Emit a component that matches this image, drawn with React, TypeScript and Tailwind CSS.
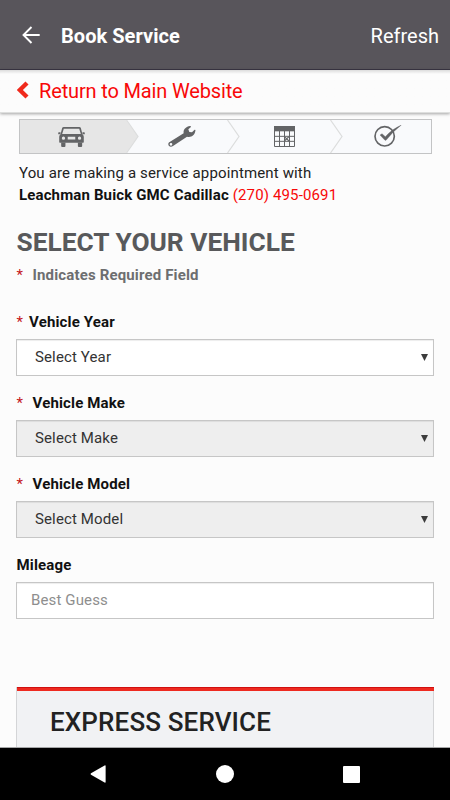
import { useState } from 'react'

const CarIcon = () => (
  <svg className="w-[27px] h-[20px]" viewBox="0 0 81 61" fill="#636466">
    <path fillRule="evenodd" d="M12 3Q13 0 17 0H64Q68 0 69 3L74 22H7ZM17 5L12 21H69L64 5Z" />
    <path d="M0 18Q0 16 2 16H7V22H0ZM81 18Q81 16 79 16H74V22H81Z" />
    <path
      fillRule="evenodd"
      d="M8 21H73Q78 24 78 30V46Q78 48 76 48H5Q3 48 3 46V30Q3 24 8 21ZM29 30V38H52V30ZM16 29A5 5 0 1 0 16 39A5 5 0 1 0 16 29ZM65 29A5 5 0 1 0 65 39A5 5 0 1 0 65 29Z"
    />
    <path d="M9 47H22V58Q22 61 19 61H12Q9 61 9 58ZM60 47H73V58Q73 61 70 61H63Q60 61 60 58Z" />
  </svg>
)

const WrenchIcon = () => (
  <svg className="w-[28px] h-[21px]" viewBox="0 0 84 63" fill="#636466">
    <path
      fillRule="evenodd"
      d="M5 48L47 22C45 11 53 2 66 0C69 0 70 2 68 4L61 10L64 18L72 19L79 12C82 10 83 12 82 15C80 28 70 35 57 32L15 60C8 65 0 60 1 54C1 51 3 49 5 48ZM9 51A4 4 0 1 0 9 59A4 4 0 1 0 9 51Z"
    />
  </svg>
)

const CalendarIcon = () => (
  <svg className="w-[21px] h-[21px]" viewBox="0 0 63 63" fill="none" stroke="#636466">
    <path d="M0 0H63V16H0Z" fill="#636466" stroke="none" />
    <path d="M1.5 15V61.5H61.5V15M0 31H63M0 46H63M16.5 15V62M31.5 15V62M46.5 15V62" strokeWidth="3" />
    <path d="M31 32L45 45M45 32L31 45" strokeWidth="3.5" />
  </svg>
)

const CheckIcon = () => (
  <svg className="w-[28px] h-[22px]" viewBox="0 0 84 66" fill="none" stroke="#636466">
    <circle cx="32" cy="34" r="29" strokeWidth="5" />
    <path d="M18 30L24 26L34 35Q54 12 82 0Q56 20 36 46H33Z" fill="#636466" stroke="#636466" strokeWidth="1" />
  </svg>
)

const Divider = ({ active }: { active?: boolean }) => (
  <svg className="w-[13px] h-[33px] shrink-0" viewBox="0 0 13 33" fill="none">
    {active && <path d="M0 0L12 16.5L0 33Z" fill="#e6e6e6" />}
    <path d="M0.5 0L12 16.5L0.5 33" stroke="#dcdddd" strokeWidth="1.2" />
  </svg>
)

const Stepper = () => (
  <div className="ml-[3px] w-[413px] h-[35px] flex border border-[#c3c4c5] bg-[#f9fafc]">
    <div className="w-[106px] bg-[#e6e6e6] flex items-center pl-[38px]"><CarIcon /></div>
    <Divider active />
    <div className="w-[88px] flex items-center pl-[29px]"><WrenchIcon /></div>
    <Divider />
    <div className="w-[90px] flex items-center pl-[34px]"><CalendarIcon /></div>
    <Divider />
    <div className="flex items-center pl-[31px] pb-px"><CheckIcon /></div>
  </div>
)

const Required = () => <span className="font-normal text-[#c4161c]">*</span>

const SelectField = ({ label, value, gap, disabled }: { label: string; value: string; gap: string; disabled?: boolean }) => (
  <div className="h-[81px]">
    <label className="flex h-[27px] pt-[1px] pl-[0.5px] text-[15px] leading-[18px] font-bold tracking-[0.15px] text-[#111]">
      <span className={gap}><Required /></span>
      {label}
    </label>
    <button
      disabled={disabled}
      className={
        (disabled ? 'bg-[#eeeeee]' : 'bg-white') +
        ' w-full h-[37px] flex items-center justify-between border border-[#c6c6c6] pl-[18px] pr-[5px] shadow-[inset_0_1px_1px_rgba(0,0,0,0.075)] text-[15px] tracking-[0.13px] text-[#333]'
      }
    >
      {value}
      <svg className="w-[7px] h-[7px]" viewBox="0 0 7 7"><path d="M0 0H7L3.5 7Z" fill="#3c3c3c" /></svg>
    </button>
  </div>
)

export default function App() {
  const [mileage, setMileage] = useState<string>('')

  return (
    <div className="w-[450px] h-[800px] flex flex-col overflow-hidden bg-[#fcfcfc] font-['Roboto',sans-serif]">
      <header className="h-[70px] shrink-0 flex items-center justify-between bg-[#58555b] border-b border-[#3a3643] pl-[22px] pr-[11px] pt-[2px] text-white">
        <div className="flex items-center">
          <svg className="w-[18px] h-[18px] mr-[21px] mb-[2px]" viewBox="0 0 18 18" fill="none" stroke="#fff" strokeWidth="1.9">
            <path d="M17.7 9H1.5M9.5 1L1.5 9L9.5 17" />
          </svg>
          <h1 className="text-[20px] font-bold tracking-[0.05px]">Book Service</h1>
        </div>
        <button className="text-[20px]">Refresh</button>
      </header>

      <a className="h-[43px] shrink-0 flex items-center pl-[17px] border-b border-[#dedfde] bg-linear-to-b from-[#dcdcdc] to-[#fcfcfc] to-[4px] shadow-[0_1px_3px_rgba(0,0,0,0.35)] text-[20px] tracking-[-0.15px] text-[#f80808]">
        <svg className="w-[12px] h-[18px] mr-[10px] mb-[2px]" viewBox="0 0 12 18" fill="none" stroke="#f02a1c" strokeWidth="4.4">
          <path d="M10 2L2.8 9L10 16" />
        </svg>
        Return to Main Website
      </a>

      <main className="flex-1 min-h-0 overflow-hidden px-4 pt-[6px]">
        <Stepper />
        <div className="pl-[3px] pt-[8px] text-[15px] leading-[22px] tracking-[0.14px] text-[#222]">
          <p>You are making a service appointment with</p>
          <p>
            <b className="text-[#111]">Leachman Buick GMC Cadillac</b> <span className="text-[#f80808]">(270) 495-0691</span>
          </p>
        </div>

        <h2 className="mt-[20px] pl-[0.5px] text-[26.3px] leading-[32px] font-bold text-[#58595b]">SELECT YOUR VEHICLE</h2>
        <p className="mt-[8px] mb-[28px] pl-[0.5px] text-[15px] leading-[18px] font-bold tracking-[0.15px] text-[#6d6e70] flex">
          <span className="w-[16px]"><Required /></span>
          Indicates Required Field
        </p>

        <SelectField label="Vehicle Year" value="Select Year" gap="w-[12.5px]" />
        <SelectField label="Vehicle Make" value="Select Make" gap="w-[16px]" disabled />
        <SelectField label="Vehicle Model" value="Select Model" gap="w-[16px]" disabled />
        <label className="block h-[27px] pt-[1px] pl-[0.5px] text-[15px] leading-[18px] font-bold tracking-[0.15px] text-[#111]">Mileage</label>
        <input
          className="block w-full h-[37px] bg-white border border-[#c6c6c6] pl-[14px] pb-[2px] shadow-[inset_0_1px_1px_rgba(0,0,0,0.075)] text-[15px] tracking-[0.13px] placeholder:text-[#8e8e8e]"
          placeholder="Best Guess"
          value={mileage}
          onChange={(e) => setMileage(e.target.value)}
        />

        <section className="mt-[68px] h-[90px] bg-[#f1f2f4] border-x border-[#d4d5d7]">
          <div className="-mr-px h-[4px] bg-[#ee2a20] border-t border-[#d01010]"></div>
          <h3 className="pl-[33px] pt-[15px] text-[26px] leading-[32px] font-medium tracking-[0.13px] text-[#222]">EXPRESS SERVICE</h3>
        </section>
      </main>

      <nav className="h-[53px] shrink-0 bg-black border-t border-[#a5a6a7] flex items-center justify-between pl-[90px] pr-[90px]">
        <svg className="w-[16px] h-[18px]" viewBox="0 0 16 18"><path d="M15.6 1V17Q15.6 18 14.6 17.6L1 9.8Q0 9 1 8.2L14.6 0.4Q15.6 0 15.6 1Z" fill="#fff" /></svg>
        <div className="w-[18px] h-[18px] rounded-full bg-white"></div>
        <div className="w-[17px] h-[17px] rounded-[1px] bg-white"></div>
      </nav>
    </div>
  )
}
